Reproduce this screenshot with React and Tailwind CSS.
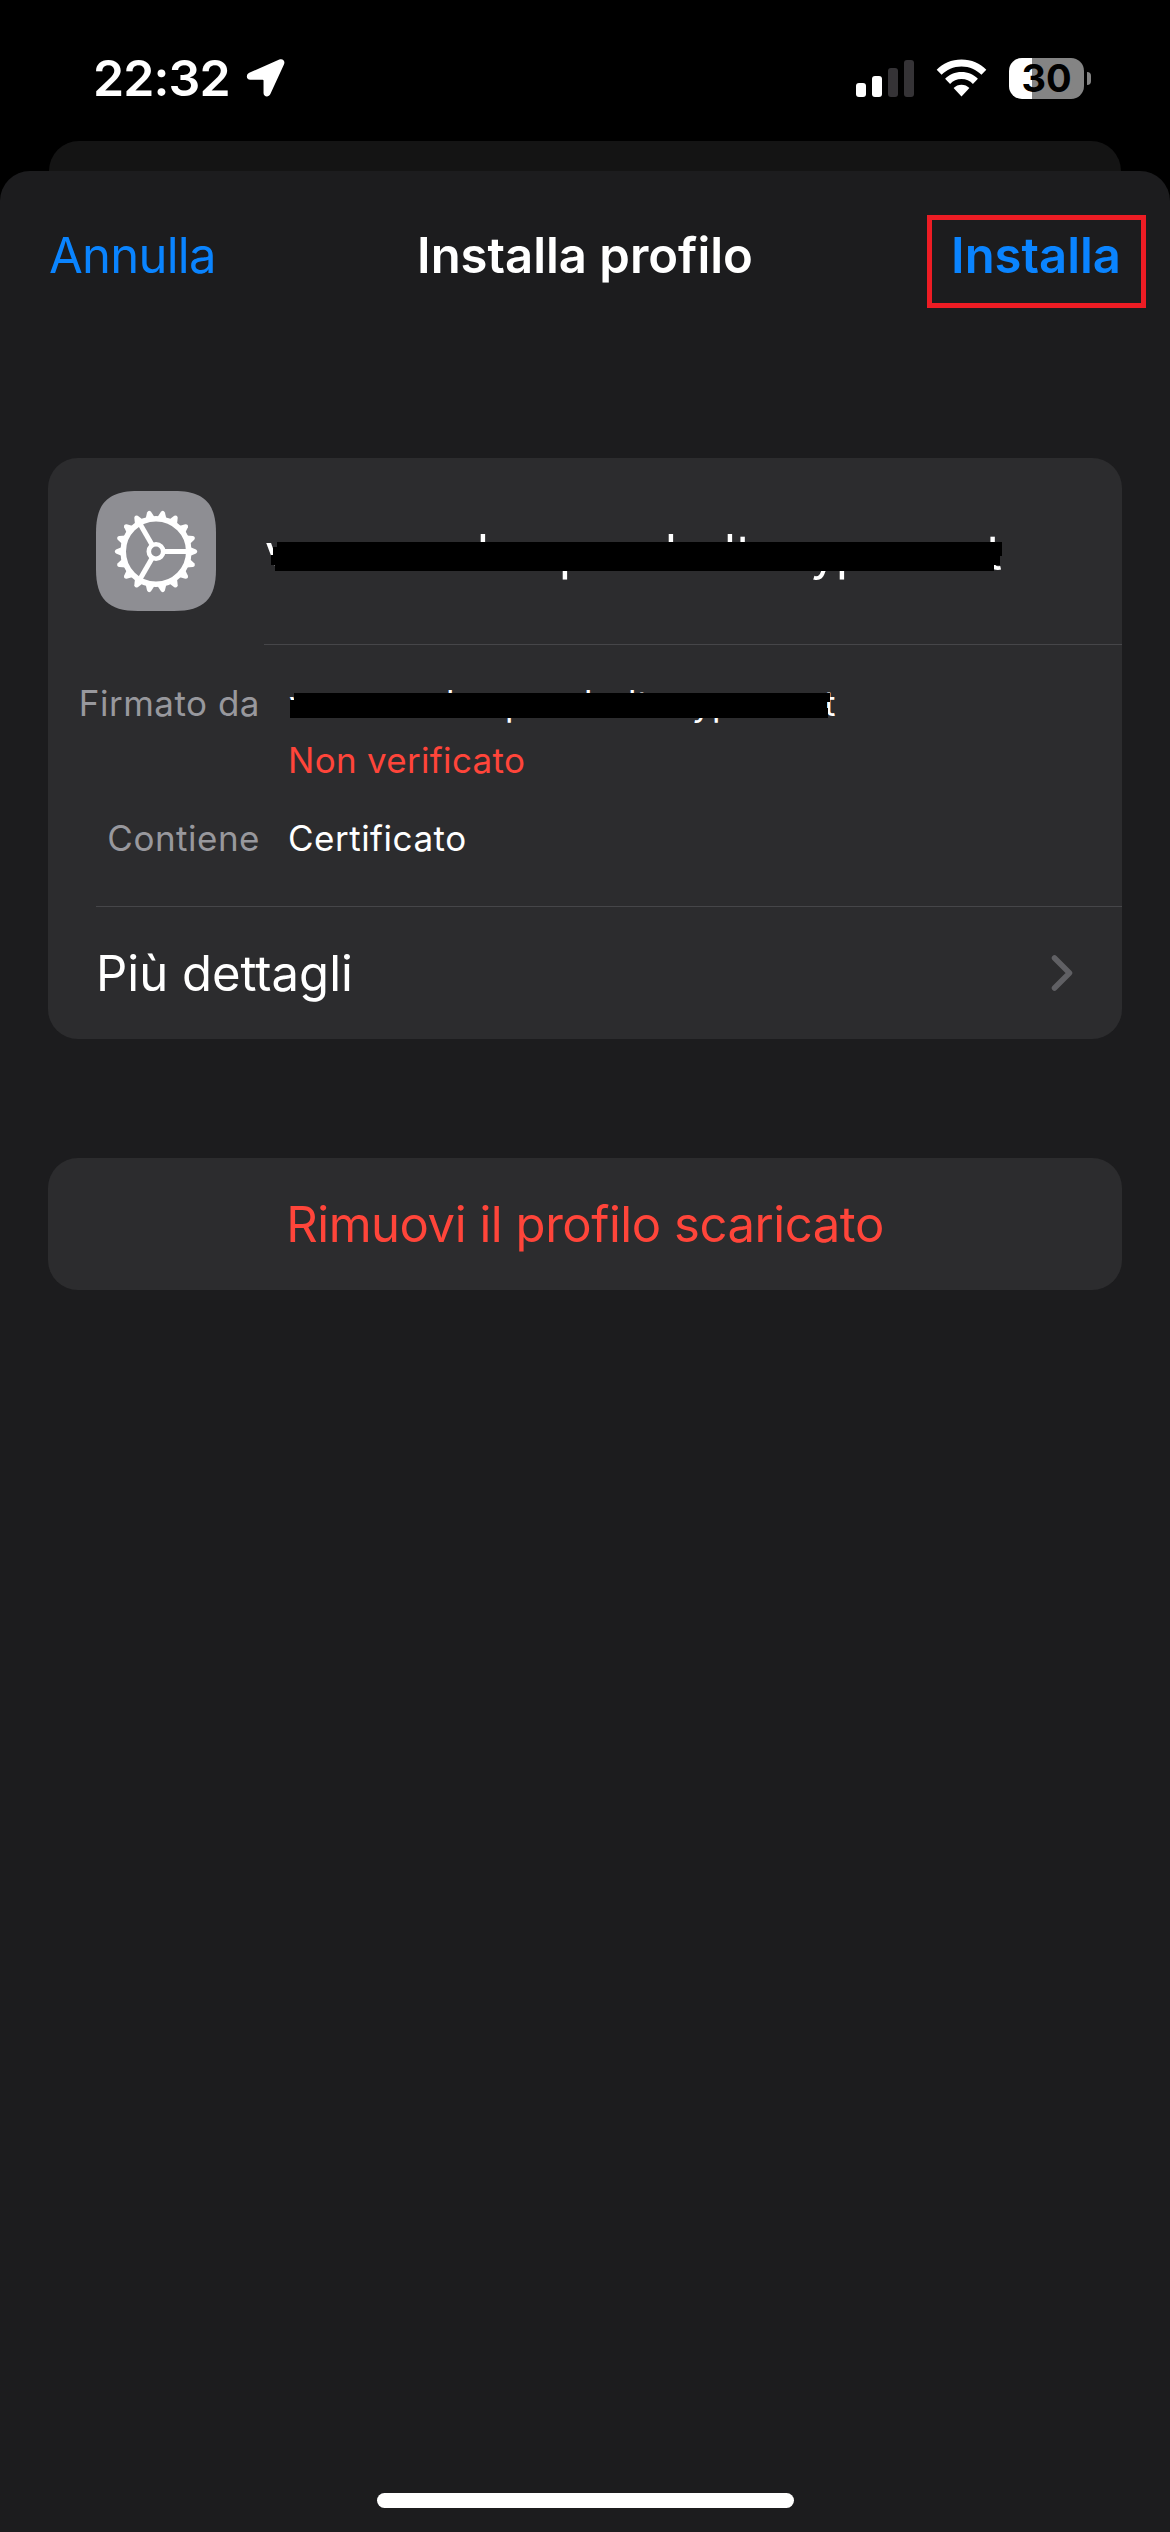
import React from 'react';

const TEETH = Array.from({ length: 18 }, (_, i) => i * 20);

// Letters whose tips stay visible around the black bars
const titleTips = [
  { char: 'v', x: 0 },
  { char: 'l', x: 212 },
  { char: 'p', x: 294 },
  { char: 'l', x: 400 },
  { char: 'l', x: 459 },
  { char: 't', x: 471 },
  { char: 'y', x: 545 },
  { char: 'p', x: 571 },
  { char: 't', x: 721 },
];

const signerTips = [
  { char: 'v', x: 0 },
  { char: 'l', x: 157 },
  { char: 'p', x: 216 },
  { char: 'l', x: 295 },
  { char: 'l', x: 339 },
  { char: 't', x: 348 },
  { char: 'y', x: 403 },
  { char: 'p', x: 423 },
  { char: 't', x: 535 },
];

const StatusBar = () => (
  <div className="flex h-[141px] items-center justify-between pt-[15px] pr-[79px] pl-[93px]">
    <div className="flex items-center gap-4">
      <span className="text-[50px] leading-none font-semibold tracking-[-0.9px]">22:32</span>
      <svg width="39.500" height="40" viewBox="0 0 41 41" fill="white">
        <path d="M34.6 1.4 3.4 15C-.4 16.8.2 22.300 4.400 22.300H17.300q.9 0 .9 .9V36c0 4.200 5.400 4.900 7.100 1.200L39.500 6.100C40.900 2.600 38 0 34.600 1.400Z" />
      </svg>
    </div>
    <div className="flex items-center">
      <div className="flex h-[37px] items-end gap-[6px]">
        <div className="h-[14px] w-[10px] rounded-[3px] bg-white" />
        <div className="h-[21px] w-[10px] rounded-[3px] bg-white" />
        <div className="h-[29px] w-[10px] rounded-[3px] bg-[#353336]" />
        <div className="h-[37px] w-[10px] rounded-[3px] bg-[#353336]" />
      </div>
      <svg className="ml-[22px]" width="51" height="38" viewBox="0 0 51 38" fill="white">
        <path d="M25.500 0.500C35.500 .5 44.300 4.500 50.300 10.700L45.400 15.800C40.500 10.600 33.500 7.400 25.500 7.400S10.500 10.600 5.600 15.800L.7 10.700C6.700 4.500 15.500 .5 25.500 .5Z" />
        <path d="M25.500 13C32 13 37.800 15.600 41.900 19.800L36.900 24.900C34 22 30 20.100 25.500 20.100S17 22 14.100 24.900L9.100 19.800C13.200 15.600 19 13 25.500 13Z" />
        <path d="M25.500 25.700C28.500 25.700 31.300 26.900 33.400 29L25.500 37.400 17.600 29C19.700 26.900 22.500 25.700 25.500 25.700Z" />
      </svg>
      <div className="ml-[22px] flex h-[41px] w-[75px] items-center justify-center rounded-[13px] bg-linear-to-r from-white from-[31%] to-[#848484] to-[31%]">
        <span className="text-[38px] leading-none font-bold text-black">30</span>
      </div>
      <div className="ml-[3px] h-[13px] w-[4px] rounded-r-full bg-[#848484]" />
    </div>
  </div>
);

const SettingsIcon = () => (
  <svg className="shrink-0" width="120" height="120" viewBox="0 0 120 120">
    <path d="M0 42C0 12 12 0 42 0H78C108 0 120 12 120 42V78C120 108 108 120 78 120H42C12 120 0 108 0 78Z" fill="#8e8e93" />
    <g transform="translate(60 60.500)" stroke="white" fill="none">
      <circle r="32.800" strokeWidth="5.600" />
      <circle r="7.200" strokeWidth="4.600" />
      {[0, 120, 240].map((deg) => (
        <path key={deg} d="M8.500 0H31" strokeWidth="5" transform={`rotate(${deg})`} />
      ))}
      {TEETH.map((deg) => (
        <path key={deg} d="M34-4.600 40-2Q42.500 0 40 2L34 4.600Z" fill="white" stroke="none" transform={`rotate(${deg})`} />
      ))}
    </g>
  </svg>
);

const Tips = ({ tips }) =>
  tips.map((tip) => (
    <span key={tip.x} className="absolute top-0" style={{ left: tip.x }}>
      {tip.char}
    </span>
  ));

const ProfileCard = () => (
  <section className="mx-12 mt-[119px] flex h-[581px] flex-col overflow-hidden rounded-[30px] bg-[#2c2c2e]">
    <div className="flex h-[187px] pt-[33px] pl-12">
      <SettingsIcon />
      <div className="ml-12 flex-1 border-b border-[#464649]">
        <div className="relative mt-[36px] ml-[1px] h-[51px] text-[49px] leading-[51px]">
          <Tips tips={titleTips} />
          <svg className="absolute top-[15px] left-[6px]" width="732" height="29" viewBox="0 0 732 29">
            <path d="M6 0H731V14H729V23H723V29H4V23H0V13H2V5H6Z" fill="black" />
          </svg>
        </div>
      </div>
    </div>

    <div className="flex h-[262px] flex-col pt-[40px]">
      <div className="flex text-[35px] leading-[36px]">
        <span className="w-[212px] text-right tracking-[0.5px] text-[#98989d]">Firmato da</span>
        <div className="ml-[29px] flex-1">
          <div className="relative h-[36px]">
            <Tips tips={signerTips} />
            <svg className="absolute top-[8px] left-[1px]" width="540" height="25" viewBox="0 0 540 25">
              <path d="M4 0H540V9H537V15H538V25H0V7H4Z" fill="black" />
            </svg>
          </div>
          <p className="mt-[21px] -ml-px tracking-[0.3px] text-[#ff453a]">Non verificato</p>
        </div>
      </div>
      <div className="mt-[42px] flex text-[35px] leading-[36px]">
        <span className="w-[212px] text-right tracking-[0.5px] text-[#98989d]">Contiene</span>
        <span className="ml-[28px] tracking-[0.5px]">Certificato</span>
      </div>
      <div className="mt-auto ml-12 border-b border-[#464649]" />
    </div>

    <button className="flex h-[132px] items-center justify-between pr-[49px] pl-12 text-left">
      <span className="pt-px text-[49px] leading-none">Più dettagli</span>
      <svg width="22" height="38" viewBox="0 0 22 38" fill="none" stroke="#606064" strokeWidth="5.500" strokeLinecap="round" strokeLinejoin="round">
        <path d="M3.500 4 18.500 19 3.500 34" />
      </svg>
    </button>
  </section>
);

export default function App() {
  return (
    <main className="flex h-[2532px] w-[1170px] flex-col overflow-hidden bg-black font-['Inter',sans-serif] text-white">
      <StatusBar />
      <div className="mx-[49px] h-[30px] shrink-0 rounded-t-[30px] bg-[#141414]" />

      <div className="flex flex-1 flex-col rounded-t-[30px] bg-[#1c1c1e]">
        <header className="flex h-[168px] items-center px-[49px] text-[49px] leading-none">
          <button className="flex-1 text-left tracking-[-0.75px] text-[#0a84ff]">Annulla</button>
          <h1 className="font-semibold">Installa profilo</h1>
          <div className="flex flex-1 justify-end">
            <button className="relative font-semibold text-[#0a84ff]">
              Installa
              <span className="absolute -top-4 -right-[25px] h-[93px] w-[219px] border-[5px] border-[#ed1c24]" />
            </button>
          </div>
        </header>

        <ProfileCard />

        <button className="mx-12 mt-[119px] h-[132px] rounded-[30px] bg-[#2c2c2e] text-[49px] leading-none tracking-[-0.45px] text-[#ff453a]">
          Rimuovi il profilo scaricato
        </button>

        <div className="mx-auto mt-auto mb-[24px] h-[15px] w-[417px] rounded-full bg-white" />
      </div>
    </main>
  );
}
